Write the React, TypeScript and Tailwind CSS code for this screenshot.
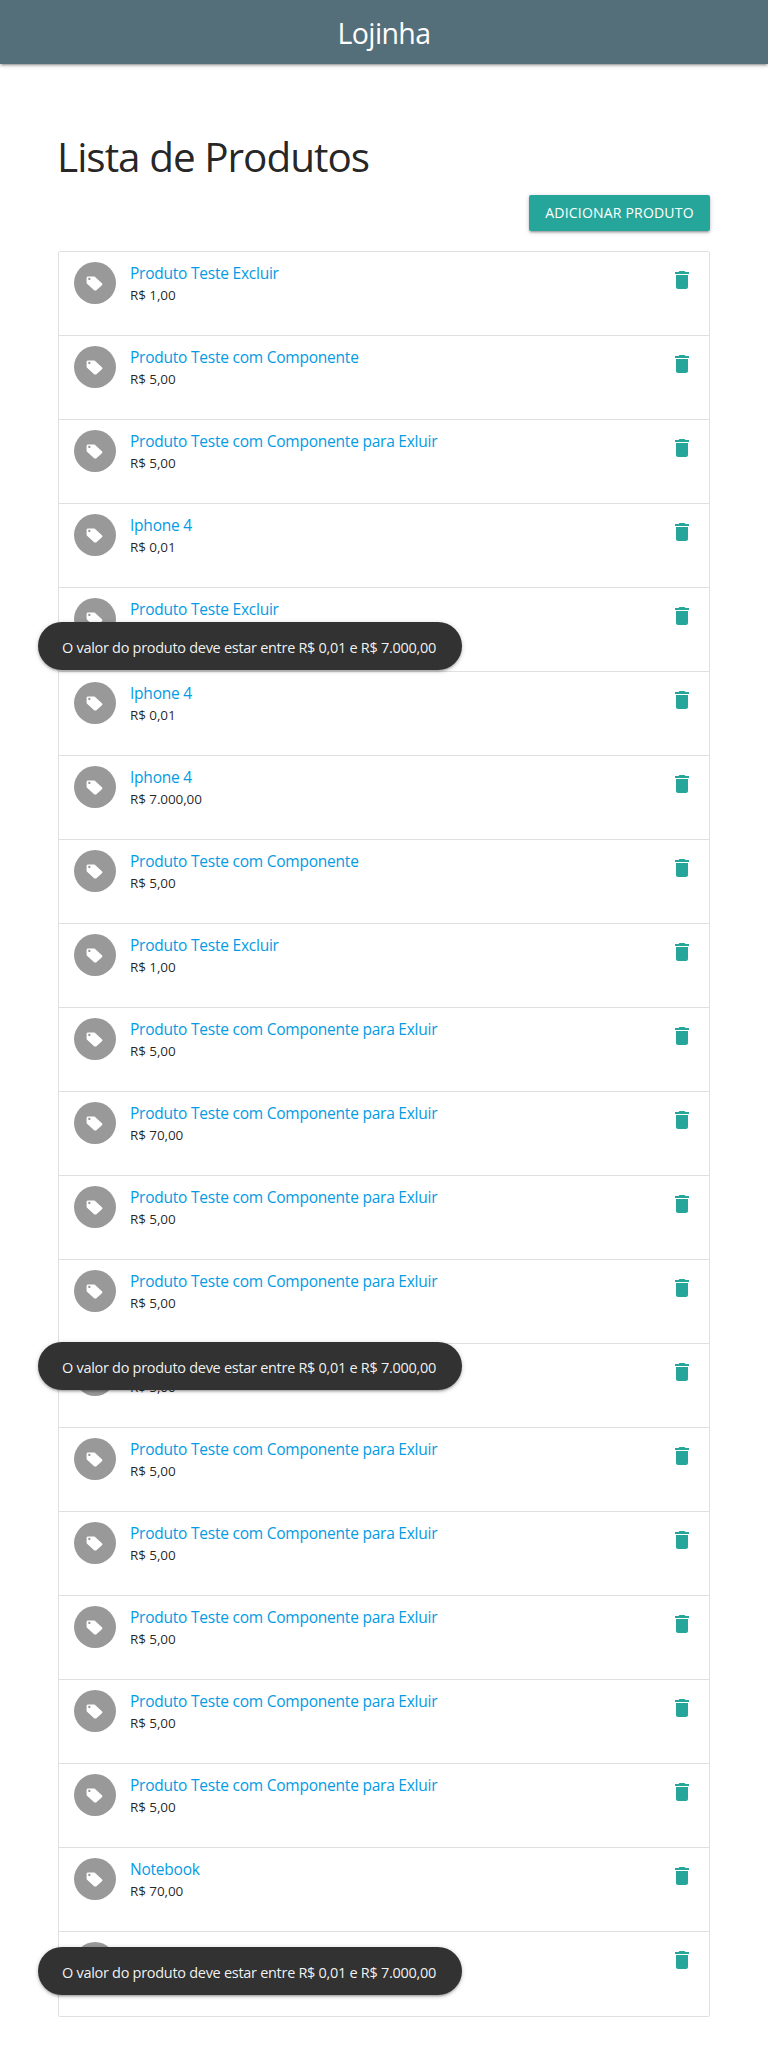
const LONG = "Produto Teste com Componente para Exluir";

const products: [string, string][] = [
  ["Produto Teste Excluir", "R$ 1,00"],
  ["Produto Teste com Componente", "R$ 5,00"],
  [LONG, "R$ 5,00"],
  ["Iphone 4", "R$ 0,01"],
  ["Produto Teste Excluir", "R$ 1,00"],
  ["Iphone 4", "R$ 0,01"],
  ["Iphone 4", "R$ 7.000,00"],
  ["Produto Teste com Componente", "R$ 5,00"],
  ["Produto Teste Excluir", "R$ 1,00"],
  [LONG, "R$ 5,00"],
  [LONG, "R$ 70,00"],
  [LONG, "R$ 5,00"],
  [LONG, "R$ 5,00"],
  [LONG, "R$ 5,00"],
  [LONG, "R$ 5,00"],
  [LONG, "R$ 5,00"],
  [LONG, "R$ 5,00"],
  [LONG, "R$ 5,00"],
  [LONG, "R$ 5,00"],
  ["Notebook", "R$ 70,00"],
  ["Notebook", "R$ 70,00"],
];

const shadow =
  "shadow-[0_2px_2px_0_rgba(0,0,0,0.14),0_3px_1px_-2px_rgba(0,0,0,0.12),0_1px_5px_0_rgba(0,0,0,0.2)]";

function TagIcon() {
  return (
    <svg viewBox="0 0 24 24" preserveAspectRatio="none" className="mr-px h-[17px] w-[19px] fill-white">
      <path d="M21.41 11.58l-9-9C12.05 2.22 11.55 2 11 2H4c-1.1 0-2 .9-2 2v7c0 .55.22 1.05.59 1.42l9 9c.36.36.86.58 1.41.58.55 0 1.05-.22 1.41-.59l7-7c.37-.36.59-.86.59-1.41 0-.55-.23-1.06-.59-1.42zM5.5 7C4.67 7 4 6.33 4 5.5S4.67 4 5.5 4 7 4.67 7 5.5 6.33 7 5.5 7z" />
    </svg>
  );
}

function TrashIcon() {
  return (
    <svg viewBox="0 0 24 24" className="size-6 fill-[#26a69a]">
      <path d="M6 19c0 1.1.9 2 2 2h8c1.1 0 2-.9 2-2V7H6v12zM19 4h-3.5l-1-1h-5l-1 1H5v2h14V4z" />
    </svg>
  );
}

function Toast({ className }: { className: string }) {
  return (
    <div
      className={`absolute left-[38px] flex h-12 w-[424px] items-center rounded-3xl bg-[#323232] pl-6 text-[14.5px] tracking-[-0.29px] whitespace-nowrap text-white/95 ${shadow} ${className}`}
    >
      <span className="pt-1">O valor do produto deve estar entre R$ 0,01 e R$ 7.000,00</span>
    </div>
  );
}

export default function App() {
  return (
    <div className="relative h-[2045px] overflow-hidden bg-white font-['Open_Sans','Noto_Sans',sans-serif] text-black/87">
      <nav className={`flex h-16 items-center justify-center bg-[#546e7a] text-white ${shadow}`}>
        <a className="pt-0.5 text-[28.5px] leading-[62px] tracking-[-0.6px]">Lojinha</a>
      </nav>
      <main className="ml-[58px] w-[652px]">
        <h1 className="-ml-px pt-[66px] text-[40.5px] leading-[54px] tracking-[-1px]">Lista de Produtos</h1>
        <div className="mt-[11px] flex justify-end">
          <button className={`h-9 w-[181px] rounded-xs bg-[#26a69a] pb-px text-[14px] tracking-[0.2px] whitespace-nowrap text-white ${shadow}`}>
            ADICIONAR PRODUTO
          </button>
        </div>
        <ul className="mt-5 rounded-xs border border-[#e0e0e0]">
          {products.map(([name, price], i) => (
            <li key={i} className="flex h-[84px] border-b border-[#e0e0e0] px-[15px] pt-[10px] last:border-b-0">
              <span className="flex size-[42px] items-center justify-center rounded-full bg-[#999]">
                <TagIcon />
              </span>
              <div className="ml-[14px] flex-1 whitespace-nowrap">
                <div className="text-[15.5px] leading-[22px] tracking-[-0.23px] text-[#039be5]">{name}</div>
                <p className="pt-px text-[13.5px] leading-[21px] tracking-[-0.1px]">{price}</p>
              </div>
              <a className="pt-[6px]">
                <TrashIcon />
              </a>
            </li>
          ))}
        </ul>
      </main>
      <Toast className="top-[622px]" />
      <Toast className="top-[1342px]" />
      <Toast className="top-[1947px]" />
    </div>
  );
}
